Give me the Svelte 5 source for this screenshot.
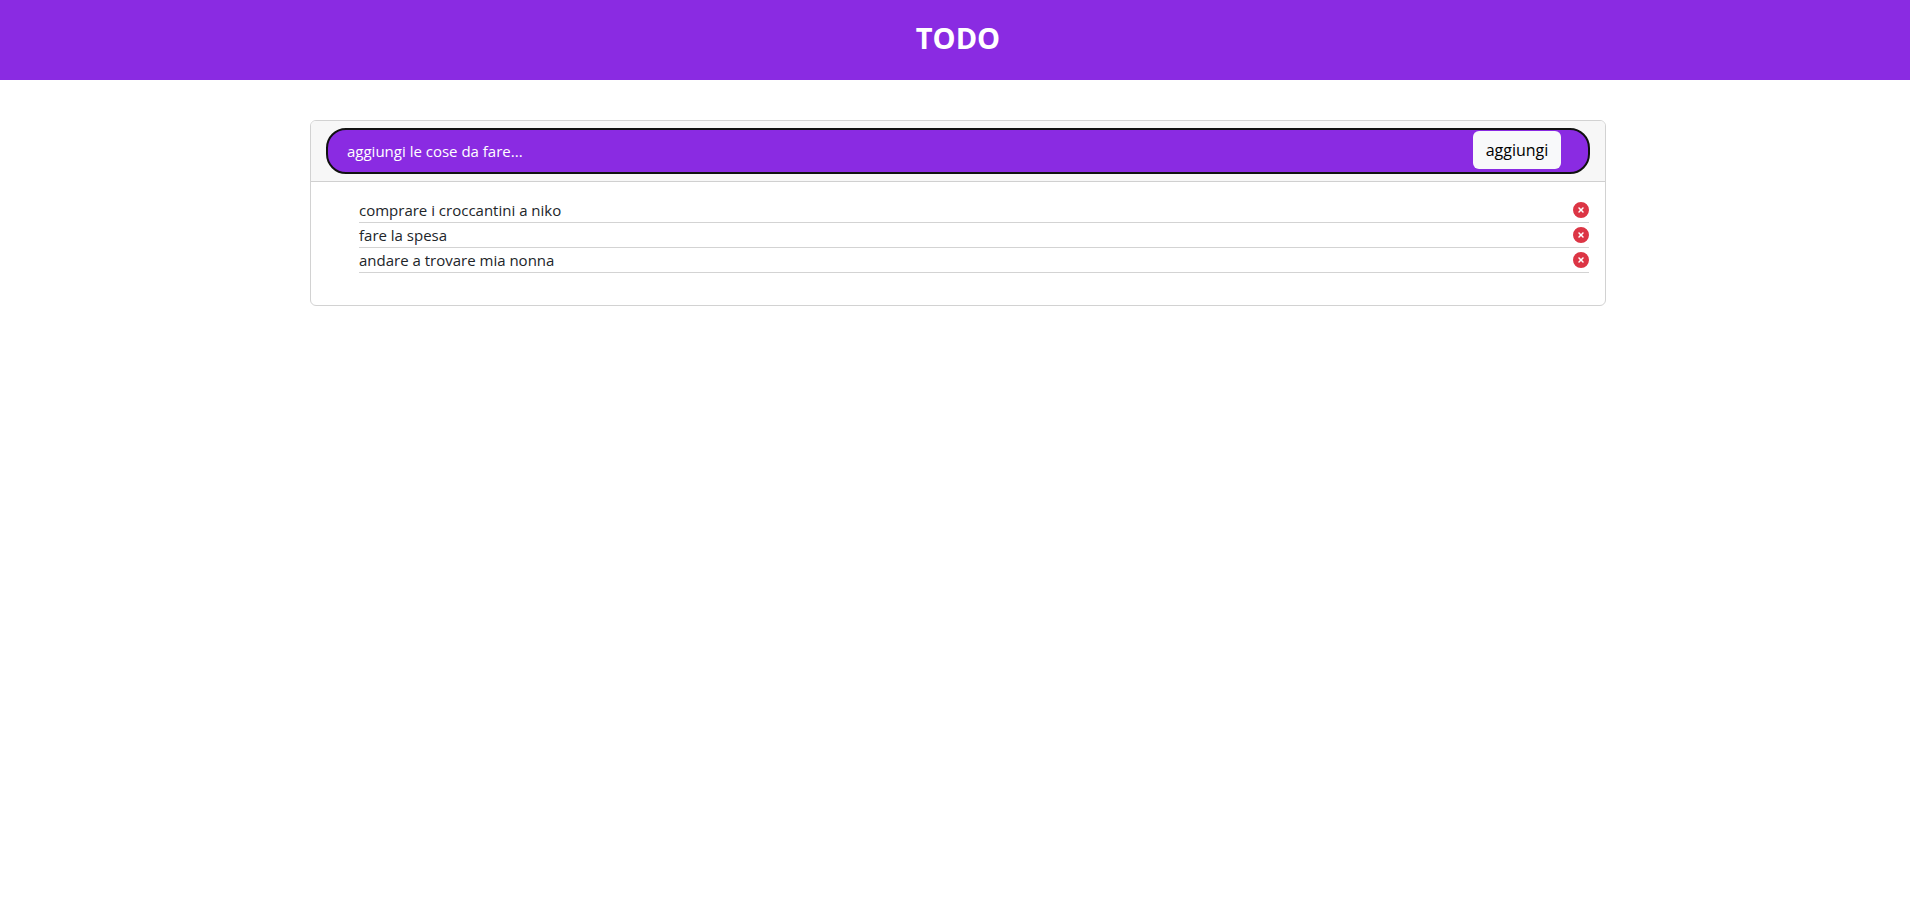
<script>
  let todos = $state([
    'comprare i croccantini a niko',
    'fare la spesa',
    'andare a trovare mia nonna'
  ]);
  let text = $state('');

  function add(event) {
    event.preventDefault();
    const value = text.trim();
    if (!value) return;
    todos.push(value);
    text = '';
  }

  function remove(index) {
    todos.splice(index, 1);
  }
</script>

<header class="banner">
  <h1>TODO</h1>
</header>

<main class="page">
  <section class="card">
    <div class="card-header">
      <form class="pill" onsubmit={add}>
        <input
          type="text"
          aria-label="aggiungi le cose da fare"
          placeholder="aggiungi le cose da fare..."
          bind:value={text}
        />
        <button class="add" type="submit">aggiungi</button>
      </form>
    </div>
    <ul class="list">
      {#each todos as todo, i}
        <li>
          <span>{todo}</span>
          <button class="remove" type="button" aria-label="elimina" onclick={() => remove(i)}>
            <svg viewBox="0 0 512 512" width="16" height="16" aria-hidden="true">
              <path
                fill="currentColor"
                d="M256 512A256 256 0 1 0 256 0a256 256 0 1 0 0 512zM175 175c9.4-9.4 24.6-9.4 33.9 0l47 47 47-47c9.4-9.4 24.6-9.4 33.9 0s9.4 24.6 0 33.9l-47 47 47 47c9.4 9.4 9.4 24.6 0 33.9s-24.6 9.4-33.9 0l-47-47-47 47c-9.4 9.4-24.6 9.4-33.9 0s-9.4-24.6 0-33.9l47-47-47-47c-9.4-9.4-9.4-24.6 0-33.9z"
              />
            </svg>
          </button>
        </li>
      {/each}
    </ul>
  </section>
</main>

<style>
  :global(body) {
    margin: 0;
    background: #fff;
    color: #212529;
    font: 15px/24px 'Open Sans', 'Noto Sans', sans-serif;
  }

  .banner,
  .page,
  .card,
  .pill,
  .list,
  .list li {
    box-sizing: border-box;
  }

  .banner {
    padding: 20px 0 24px 6px;
    background: #8a2be2;
    color: #fff;
    text-align: center;
  }

  h1 {
    margin: 0;
    font-size: 29px;
    line-height: 36px;
    font-weight: 700;
  }

  .page {
    padding: 40px 12px 40px 18px;
  }

  .card {
    max-width: 1296px;
    margin: 0 auto;
    border: 1px solid #d2d2d2;
    border-radius: 6px;
    overflow: hidden;
  }

  .card-header {
    padding: 7px 15px;
    background: #f7f7f7;
    border-bottom: 1px solid #d0d0d0;
  }

  .pill {
    display: flex;
    align-items: flex-start;
    height: 46px;
    padding: 1px 27px 0 19px;
    border: 2px solid #111;
    border-radius: 20px;
    background: #8a2be2;
  }

  input {
    flex: 1;
    min-width: 0;
    height: 40px;
    padding: 0;
    border: 0;
    outline: 0;
    background: transparent;
    color: #fff;
    font: inherit;
  }

  input::placeholder {
    color: #fff;
    opacity: 1;
  }

  .add {
    min-width: 88px;
    height: 38px;
    padding: 0 12px;
    border: 0;
    border-radius: 6px;
    background: #f8f9fa;
    color: #000;
    font: inherit;
    font-size: 16px;
    cursor: pointer;
  }

  .list {
    margin: 0;
    padding: 16px 16px 32px 48px;
    list-style: none;
  }

  .list li {
    display: flex;
    align-items: center;
    justify-content: space-between;
    border-bottom: 1px solid #d3d3d3;
  }

  .remove {
    display: flex;
    padding: 0;
    border: 0;
    background: none;
    color: #dc3545;
    cursor: pointer;
  }
</style>
